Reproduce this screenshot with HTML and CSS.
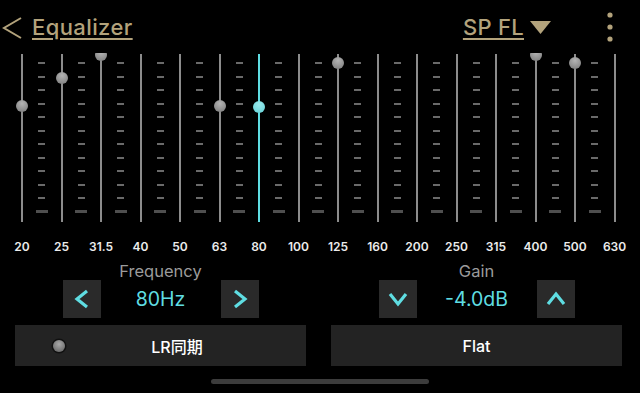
FILE: index.html
```html
<!DOCTYPE html>
<html lang="ja">
<head>
  <meta charset="UTF-8" />
  <meta name="viewport" content="width=device-width, initial-scale=1.0"/>
  <title>Equalizer</title>
  <link rel="stylesheet" href="styles.css">
</head>
<body>

  <header class="topbar">
    <svg class="back" width="21" height="24" viewBox="0 0 21 24">
      <polyline points="19,2 2,12 19,22" fill="none" stroke="#b3a37c" stroke-width="2"/>
    </svg>
    <span class="title">Equalizer</span>
    <span class="speaker">SP FL</span>
    <svg class="tri" width="21" height="13" viewBox="0 0 21 13">
      <polygon points="0,0 21,0 10.5,13" fill="#b3a37c"/>
    </svg>
    <svg class="more" width="6" height="30" viewBox="0 0 6 30">
      <circle cx="3" cy="3" r="2.6" fill="#b3a37c"/>
      <circle cx="3" cy="15" r="2.6" fill="#b3a37c"/>
      <circle cx="3" cy="27" r="2.6" fill="#b3a37c"/>
    </svg>
  </header>

  <div class="bands">
    <div class="band"><span class="knob" style="top:47px"></span></div>
    <div class="ticks"></div>
    <div class="band"><span class="knob" style="top:19px"></span></div>
    <div class="ticks"></div>
    <div class="band"><span class="knob" style="top:-4px"></span></div>
    <div class="ticks"></div>
    <div class="band"></div>
    <div class="ticks"></div>
    <div class="band"></div>
    <div class="ticks"></div>
    <div class="band"><span class="knob" style="top:47px"></span></div>
    <div class="ticks"></div>
    <div class="band active"><span class="knob" style="top:48px"></span></div>
    <div class="ticks"></div>
    <div class="band"></div>
    <div class="ticks"></div>
    <div class="band"><span class="knob" style="top:4px"></span></div>
    <div class="ticks"></div>
    <div class="band"></div>
    <div class="ticks"></div>
    <div class="band"></div>
    <div class="ticks"></div>
    <div class="band"></div>
    <div class="ticks"></div>
    <div class="band"></div>
    <div class="ticks"></div>
    <div class="band"><span class="knob" style="top:-4px"></span></div>
    <div class="ticks"></div>
    <div class="band"><span class="knob" style="top:4px"></span></div>
    <div class="ticks"></div>
    <div class="band"></div>
  </div>

  <div class="freqs">
    <span>20</span><span>25</span><span>31.5</span><span>40</span>
    <span>50</span><span>63</span><span>80</span><span>100</span>
    <span>125</span><span>160</span><span>200</span><span>250</span>
    <span>315</span><span>400</span><span>500</span><span>630</span>
  </div>

  <div class="panel">
    <div class="setting">
      <div class="setting-label">Frequency</div>
      <div class="stepper">
        <button class="step-btn" type="button">
          <svg width="16" height="20" viewBox="0 0 16 20"><polyline points="13,2 3,10 13,18" fill="none" stroke="#5fdde2" stroke-width="3.2"/></svg>
        </button>
        <span class="value">80Hz</span>
        <button class="step-btn" type="button">
          <svg width="16" height="20" viewBox="0 0 16 20"><polyline points="3,2 13,10 3,18" fill="none" stroke="#5fdde2" stroke-width="3.2"/></svg>
        </button>
      </div>
    </div>
    <div class="setting">
      <div class="setting-label">Gain</div>
      <div class="stepper">
        <button class="step-btn" type="button">
          <svg width="20" height="16" viewBox="0 0 20 16"><polyline points="2,3 10,13 18,3" fill="none" stroke="#5fdde2" stroke-width="3.2"/></svg>
        </button>
        <span class="value">-4.0dB</span>
        <button class="step-btn" type="button">
          <svg width="20" height="16" viewBox="0 0 20 16"><polyline points="2,13 10,3 18,13" fill="none" stroke="#5fdde2" stroke-width="3.2"/></svg>
        </button>
      </div>
    </div>
  </div>

  <div class="actions">
    <button class="action-btn sync" type="button"><span class="led"></span><span class="action-text">LR同期</span></button>
    <button class="action-btn" type="button"><span class="action-text">Flat</span></button>
  </div>

  <div class="home-bar"></div>

</body>
</html>
```

FILE: styles.css
```css
* {
  box-sizing: border-box;
}

body {
  margin: 0;
  width: 640px;
  height: 393px;
  overflow: hidden;
  background: #000;
  color: #fff;
  font-family: 'Inter', 'Noto Sans CJK JP', sans-serif;
}

/* header */
.topbar {
  height: 53px;
  display: flex;
  align-items: flex-start;
  padding: 14px 27px 0 2px;
  color: #b3a37c;
}

.back {
  margin-top: 2px;
}

.title,
.speaker {
  font-size: 22px;
  line-height: 26px;
  font-weight: 500;
  text-decoration: underline;
  text-decoration-thickness: 2px;
  text-underline-offset: 3px;
}

.title {
  margin-left: 9px;
  letter-spacing: 0.4px;
}

.speaker {
  margin-left: auto;
  letter-spacing: 0.3px;
}

.tri {
  margin: 7px 0 0 6px;
}

.more {
  margin: -2px 0 0 56px;
}

/* sliders */
.bands {
  height: 169px;
  overflow: hidden;
  display: grid;
  grid-template-columns: repeat(31, 19.75px);
  padding-left: 12.125px;
}

.band {
  position: relative;
}

.band::before {
  content: "";
  display: block;
  width: 2px;
  height: 168px;
  margin: 1px auto 0;
  background: #8c8c8c;
}

.band.active::before {
  background: #5fdde2;
}

.knob {
  position: absolute;
  left: 50%;
  width: 12px;
  height: 12px;
  margin-left: -6px;
  border-radius: 50%;
  background: radial-gradient(circle at 50% 30%, #b4b4b4, #8a8a8a 70%, #6f6f6f);
}

.band.active .knob {
  background: radial-gradient(circle at 50% 30%, #9ae9ec, #72d8dc 70%, #58bfc4);
}

.ticks {
  background:
    linear-gradient(#4f4f4f, #4f4f4f) center 157px / 12px 3px no-repeat,
    repeating-linear-gradient(to bottom, #6a6a6a 0 2px, transparent 2px 13.5px) center 9px / 7px 137px no-repeat;
}

/* frequency labels */
.freqs {
  display: grid;
  grid-template-columns: repeat(16, 39.5px);
  padding-left: 2.25px;
  margin-top: 18px;
  height: 16px;
  font-size: 12px;
  line-height: 14px;
  font-weight: 600;
  color: #ececec;
  text-align: center;
  white-space: nowrap;
}

/* frequency / gain */
.panel {
  display: grid;
  grid-template-columns: 291px 291px;
  column-gap: 25px;
  padding: 0 18px 0 15px;
  margin-top: 6px;
}

.setting {
  display: flex;
  flex-direction: column;
  align-items: center;
}

.setting-label {
  height: 18px;
  font-size: 16.5px;
  line-height: 18px;
  color: #9b9b9b;
}

.stepper {
  display: flex;
  align-items: center;
}

.step-btn {
  width: 38px;
  height: 38px;
  padding: 0;
  border: none;
  background: #2a2a2a;
  display: flex;
  align-items: center;
  justify-content: center;
}

.value {
  width: 120px;
  text-align: center;
  font-size: 19.5px;
  color: #5fdde2;
}

/* bottom buttons */
.actions {
  display: grid;
  grid-template-columns: 291px 291px;
  column-gap: 25px;
  padding: 0 18px 0 15px;
  margin-top: 7px;
}

.action-btn {
  height: 41px;
  border: none;
  background: #232323;
  color: #fff;
  font-family: inherit;
  font-size: 16px;
  font-weight: 500;
  display: flex;
  align-items: center;
  justify-content: center;
  padding: 0;
}

.action-btn.sync {
  padding: 0 17px 0 38px;
}

.led {
  width: 12px;
  height: 12px;
  border-radius: 50%;
  background: radial-gradient(circle at 50% 35%, #a8a8a8, #6e6e6e 75%);
  box-shadow: 0 0 0 1.5px #111;
}

.action-text {
  flex: 1;
  text-align: center;
}

.home-bar {
  width: 218px;
  height: 5px;
  margin: 13px auto 0;
  border-radius: 3px;
  background: #3c3c3c;
}
```
